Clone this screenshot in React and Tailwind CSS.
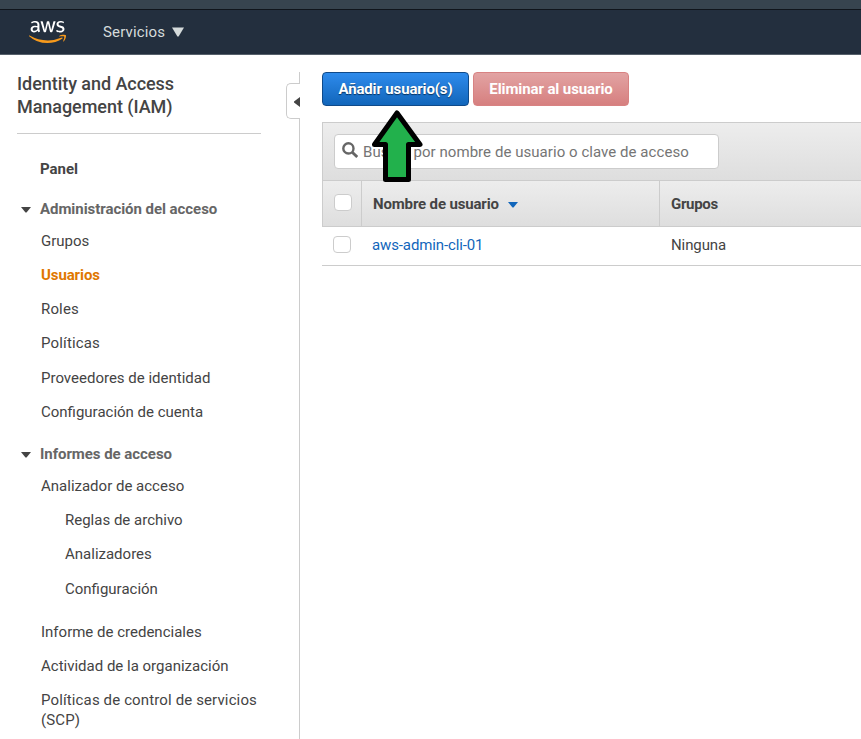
import { FaAws } from "react-icons/fa";

function Caret({ className }) {
  return (
    <svg className={className} viewBox="0 0 10 6" aria-hidden="true">
      <path d="M0 0h10L5.5 5.6h-1z" fill="currentColor" />
    </svg>
  );
}

function SearchIcon({ className }) {
  return (
    <svg className={className} viewBox="0 0 16 16" fill="none" stroke="currentColor" strokeWidth="2.4" aria-hidden="true">
      <circle cx="6.4" cy="6.4" r="5.1" />
      <path d="M10.2 10.2l5 4.8" strokeWidth="2.8" />
    </svg>
  );
}

function TopBar() {
  return (
    <header className="shrink-0">
      <div className="h-[10px] border-b border-[#10151c] bg-[#37444f]" />
      <div className="flex h-[45px] items-start border-b border-[#56606b] bg-[#232f3e] pl-[29px]">
        <div className="mt-[7px] h-[30px] w-[37px]">
          <div className="h-[17px] overflow-hidden">
            <FaAws className="h-[30px] w-[37px] text-white" />
          </div>
          <div className="h-[13px] overflow-hidden">
            <FaAws className="-mt-[17px] h-[30px] w-[37px] text-[#f79a1c]" />
          </div>
        </div>
        <button className="ml-[37px] mt-3 flex h-5 items-center text-[15px] leading-5 tracking-[0.15px] text-[#d5dbdb]">
          Servicios
          <svg className="ml-[7px] h-[10px] w-3" viewBox="0 0 12 10" aria-hidden="true">
            <path d="M0 0.5h12L6.6 9.6h-1.2z" fill="currentColor" />
          </svg>
        </button>
      </div>
    </header>
  );
}

function Section({ children, className }) {
  return (
    <div className={`flex h-5 items-center pl-[21px] font-bold tracking-[-0.05px] text-[#666] ${className}`}>
      <Caret className="mr-[9px] mt-[2px] h-[6px] w-[10px] text-[#444]" />
      <span className="whitespace-nowrap">{children}</span>
    </div>
  );
}

function Sidebar() {
  return (
    <aside className="flex w-[300px] shrink-0">
      <div className="w-[286px] shrink-0 pt-[17px] text-[15px] leading-5">
        <h1 className="ml-[17px] w-[244px] border-b border-[#ccc] pb-[15px] text-[18px] font-medium leading-[23px] tracking-[-0.05px] text-[#444]">
          Identity and Access
          <br />
          Management (IAM)
        </h1>
        <nav>
          <div className="mt-[25px] pl-10 font-bold">Panel</div>
          <Section className="mt-5">Administración del acceso</Section>
          <ul className="pl-[41px]">
            <li className="mt-3">Grupos</li>
            <li className="mt-[14px] font-bold tracking-[-0.1px] text-[#e07700]">Usuarios</li>
            <li className="mt-[14px] tracking-[0.15px]">Roles</li>
            <li className="mt-[14px] tracking-[0.15px]">Políticas</li>
            <li className="mt-[15px]">Proveedores de identidad</li>
            <li className="mt-[14px]">Configuración de cuenta</li>
          </ul>
          <Section className="mt-[22px]">Informes de acceso</Section>
          <ul className="pl-[41px]">
            <li className="mt-3">Analizador de acceso</li>
            <li className="mt-[14px] pl-6">Reglas de archivo</li>
            <li className="mt-[14px] pl-6">Analizadores</li>
            <li className="mt-[15px] pl-6">Configuración</li>
            <li className="mt-[23px]">Informe de credenciales</li>
            <li className="mt-[14px]">Actividad de la organización</li>
            <li className="mt-[14px] whitespace-nowrap tracking-[0.13px]">
              Políticas de control de servicios
              <br />
              (SCP)
            </li>
          </ul>
        </nav>
      </div>
      <div className="flex w-[14px] flex-col pt-[17px]">
        <div className="h-[11px] border-r border-[#ccc]" />
        <button className="flex h-9 items-center justify-end rounded-l-[5px] border border-r-0 border-[#ccc]">
          <svg className="mt-[2px] h-[10px] w-[6px]" viewBox="0 0 6 10" aria-hidden="true">
            <path d="M6 0v10L0 5.4v-.8z" fill="#444" />
          </svg>
        </button>
        <div className="flex-1 border-r border-[#ccc]" />
      </div>
    </aside>
  );
}

function Checkbox() {
  return <span className="block h-[17px] w-[18px] rounded-[4px] border border-[#ccc] bg-white" />;
}

function Main() {
  return (
    <main className="min-w-0 flex-1 pl-[22px] pt-[17px] text-[15px] leading-5">
      <div className="flex gap-1 font-bold text-white">
        <button className="h-[34px] w-[147px] whitespace-nowrap rounded-[4px] border border-[#0f4a8a] bg-linear-to-b from-[#2e8bec] to-[#1166bb] tracking-[-0.15px] [text-shadow:0_1px_1px_#073360]">
          Añadir usuario(s)
        </button>
        <button className="h-[34px] w-[156px] whitespace-nowrap rounded-[4px] border border-[#d88282] bg-linear-to-b from-[#e2a3a3] to-[#d67f7f] tracking-[-0.1px]">
          Eliminar al usuario
        </button>
      </div>
      <section className="mt-4 border-l border-t border-[#ccc] bg-linear-to-b from-[#ededed] to-[#dedede]">
        <div className="relative h-[57px] pl-[11px] pt-[11px]">
          <div className="flex h-[35px] w-[385px] items-center whitespace-nowrap rounded-[4px] border border-[#ccc] bg-white pl-[7px] text-[#757575]">
            <SearchIcon className="-mt-[3px] mr-[5px] h-4 w-4 text-[#666]" />
            <span className="tracking-[0.05px]">Buscar por nombre de usuario o clave de acceso</span>
          </div>
          <svg className="absolute left-[47px] top-[-15px] h-[76px] w-[56px]" viewBox="0 0 56 76" aria-hidden="true">
            <path
              d="M27 5 L50 36.5 H38.5 V71.5 H15.5 V36.5 H4.5 Z"
              fill="#22b14c"
              stroke="#000"
              strokeWidth="5"
              strokeLinejoin="round"
            />
          </svg>
        </div>
      </section>
      <div className="flex h-[47px] border-y border-l border-[#ccc] bg-linear-to-b from-[#ededed] to-[#dedede] font-bold">
        <div className="w-[39px] border-r border-[#ccc] pl-[11px] pt-[13px]">
          <Checkbox />
        </div>
        <div className="flex w-[298px] items-center border-r border-[#ccc] pl-[11px] tracking-[-0.15px]">
          Nombre de usuario
          <Caret className="ml-[9px] mt-[3px] h-[6px] w-[10px] text-[#1166bb]" />
        </div>
        <div className="flex items-center pl-[11px] tracking-[-0.3px]">Grupos</div>
      </div>
      <div className="flex h-[39px] border-b border-[#ccc]">
        <div className="w-[50px] pl-[11px] pt-[9px]">
          <Checkbox />
        </div>
        <a className="w-[299px] pt-2 tracking-[-0.12px] text-[#1166bb]">aws-admin-cli-01</a>
        <div className="pt-2 tracking-[-0.1px]">Ninguna</div>
      </div>
    </main>
  );
}

export default function App() {
  return (
    <div className="flex h-[739px] w-full flex-col overflow-hidden bg-white font-['Roboto','Noto_Sans',sans-serif] text-[#444]">
      <TopBar />
      <div className="flex flex-1 overflow-hidden">
        <Sidebar />
        <Main />
      </div>
    </div>
  );
}
